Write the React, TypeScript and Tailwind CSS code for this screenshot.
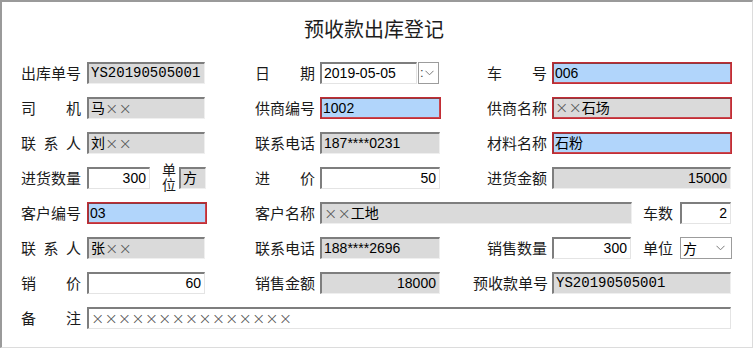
import React from 'react';

const cjk = "font-['Noto_Sans_CJK_SC',sans-serif]";
const latin = "font-['Liberation_Sans','Noto_Sans_CJK_SC',sans-serif]";
const mono = "font-['Liberation_Mono','Noto_Sans_CJK_SC',monospace]";

type Variant = 'gray' | 'white' | 'blue' | 'grayRed';

const variants: Record<Variant, string> = {
  gray: 'bg-[#dadada] border-t-2 border-l-2 border-b border-r border-t-[#7e7e7e] border-l-[#7e7e7e] border-b-[#efefef] border-r-[#efefef]',
  white: 'bg-white border-t-2 border-l-2 border-b border-r border-t-[#7e7e7e] border-l-[#7e7e7e] border-b-[#e4e4e4] border-r-[#e4e4e4]',
  blue: 'bg-[#b1d5fb] border border-[#c22d35] shadow-[inset_1px_1px_0_#8d3a3f,inset_-1px_-1px_0_#c9464d]',
  grayRed: 'bg-[#dadada] border border-[#c22d35] shadow-[inset_1px_1px_0_#8d3a3f,inset_-1px_-1px_0_#c9464d]',
};

// render × as thin full-width-ish crosses
const withX = (s: string) =>
  s.split('').map((ch, i) =>
    ch === '×' ? (
      <span key={i} className="text-[16px] leading-[22px] font-['DejaVu_Sans',sans-serif] font-extralight text-[#555]">×</span>
    ) : (
      <span key={i}>{ch}</span>
    )
  );

const Field = ({
  value,
  variant = 'gray',
  right,
  isMono,
  className,
}: {
  value: string;
  variant?: Variant;
  right?: boolean;
  isMono?: boolean;
  className: string;
}) => (
  <div
    className={`h-[22px] flex items-center overflow-hidden whitespace-nowrap text-[14px] text-black ${
      right ? 'justify-end pr-[3px]' : 'pl-[2px]'
    } ${isMono ? mono : latin} ${variants[variant]} ${className}`}
  >
    {withX(value)}
  </div>
);

// justified label, e.g. 司   机
const Label = ({ text, className = 'w-[60px]', spread }: { text: string; className?: string; spread?: boolean }) => (
  <div className={`${cjk} text-[15px] leading-[22px] text-[#1b1b1b] whitespace-nowrap flex ${spread ? 'justify-between' : ''} ${className}`}>
    {text.split('').map((c, i) => (
      <span key={i}>{c}</span>
    ))}
  </div>
);

const Chevron = () => (
  <svg width="9" height="6" viewBox="0 0 9 6" className="shrink-0">
    <polyline points="0.5,0.8 4.5,4.8 8.5,0.8" fill="none" stroke="#7a7a7a" strokeWidth="1" />
  </svg>
);

export default function App() {
  return (
    <div className="w-[755px] h-[350px] bg-white">
      <div className="w-[753px] h-[348px] border-t-2 border-l-2 border-r border-b border-t-[#9a9a9a] border-l-[#9a9a9a] border-r-[#dcdcdc] border-b-[#dcdcdc] pt-[17px]">
        <div className={`${cjk} text-[20px] leading-[20px] text-[#1d1d1d] text-center pr-[6px]`}>预收款出库登记</div>

        <div className="mt-[23px] pl-[19px] flex flex-col gap-[13px]">
          {/* row 1 */}
          <div className="flex items-center h-[22px]">
            <div className="w-[234px] flex items-center gap-[6px]">
              <Label text="出库单号" />
              <Field value="YS20190505001" isMono className="w-[118px]" />
            </div>
            <div className="w-[232px] flex items-center gap-[5px]">
              <Label text="日期" spread />
              <Field value="2019-05-05" variant="white" className="w-[97px]" />
              <div className={`-ml-[4px] w-[21px] h-[22px] border border-[#9c9c9c] bg-white flex items-center gap-[1px] ${latin} text-[13px] text-[#444]`}>
                <span className="pl-[1px]">:</span>
                <Chevron />
              </div>
            </div>
            <div className="flex items-center gap-[5px]">
              <Label text="车号" spread />
              <Field value="006" variant="blue" className="w-[180px]" />
            </div>
          </div>

          {/* row 2 */}
          <div className="flex items-center h-[22px]">
            <div className="w-[234px] flex items-center gap-[6px]">
              <Label text="司机" spread />
              <Field value="马××" className="w-[118px]" />
            </div>
            <div className="w-[232px] flex items-center gap-[5px]">
              <Label text="供商编号" />
              <Field value="1002" variant="blue" className="w-[121px]" />
            </div>
            <div className="flex items-center gap-[5px]">
              <Label text="供商名称" />
              <Field value="××石场" variant="grayRed" className="w-[180px]" />
            </div>
          </div>

          {/* row 3 */}
          <div className="flex items-center h-[22px]">
            <div className="w-[234px] flex items-center gap-[6px]">
              <Label text="联系人" spread />
              <Field value="刘××" className="w-[118px]" />
            </div>
            <div className="w-[232px] flex items-center gap-[5px]">
              <Label text="联系电话" />
              <Field value="187****0231" className="w-[120px]" />
            </div>
            <div className="flex items-center gap-[5px]">
              <Label text="材料名称" />
              <Field value="石粉" variant="blue" className="w-[180px]" />
            </div>
          </div>

          {/* row 4 */}
          <div className="flex items-center h-[22px]">
            <div className="w-[234px] flex items-center">
              <Label text="进货数量" />
              <Field value="300" variant="white" right className="ml-[6px] w-[63px]" />
              <div className={`${cjk} ml-[11px] w-[15px] h-[30px] text-[14px] leading-[15px] tracking-[1px] text-[#1b1b1b] [writing-mode:vertical-rl]`}>
                单位
              </div>
              <Field value="方" className="ml-[3px] w-[27px]" />
            </div>
            <div className="w-[232px] flex items-center gap-[5px]">
              <Label text="进价" spread />
              <Field value="50" variant="white" right className="w-[120px]" />
            </div>
            <div className="flex items-center gap-[5px]">
              <Label text="进货金额" />
              <Field value="15000" right className="w-[179px]" />
            </div>
          </div>

          {/* row 5 */}
          <div className="flex items-center h-[22px]">
            <div className="w-[234px] flex items-center gap-[6px]">
              <Label text="客户编号" />
              <Field value="03" variant="blue" className="w-[120px]" />
            </div>
            <div className="flex items-center">
              <Label text="客户名称" />
              <Field value="××工地" className="ml-[5px] w-[312px]" />
              <Label text="车数" className="ml-[11px] w-[30px]" />
              <Field value="2" variant="white" right className="ml-[7px] w-[51px]" />
            </div>
          </div>

          {/* row 6 */}
          <div className="flex items-center h-[22px]">
            <div className="w-[234px] flex items-center gap-[6px]">
              <Label text="联系人" spread />
              <Field value="张××" className="w-[118px]" />
            </div>
            <div className="w-[232px] flex items-center gap-[5px]">
              <Label text="联系电话" />
              <Field value="188****2696" className="w-[120px]" />
            </div>
            <div className="flex items-center">
              <Label text="销售数量" />
              <Field value="300" variant="white" right className="ml-[5px] w-[79px]" />
              <Label text="单位" className="ml-[12px] w-[30px]" />
              <div className={`ml-[7px] w-[52px] h-[22px] border border-[#9c9c9c] bg-white flex items-center justify-between pl-[2px] pr-[6px] ${cjk} text-[14px] text-black`}>
                <span>方</span>
                <Chevron />
              </div>
            </div>
          </div>

          {/* row 7 */}
          <div className="flex items-center h-[22px]">
            <div className="w-[234px] flex items-center gap-[6px]">
              <Label text="销价" spread />
              <Field value="60" variant="white" right className="w-[118px]" />
            </div>
            <div className="w-[218px] flex items-center gap-[5px]">
              <Label text="销售金额" />
              <Field value="18000" right className="w-[120px]" />
            </div>
            <div className="flex items-center gap-[5px]">
              <Label text="预收款单号" className="w-[74px]" />
              <Field value="YS20190505001" isMono className="w-[179px]" />
            </div>
          </div>

          {/* row 8 */}
          <div className="flex items-center h-[22px]">
            <div className="flex items-center gap-[6px]">
              <Label text="备注" spread />
              <Field value="×××××××××××××××" variant="white" className="w-[644px]" />
            </div>
          </div>
        </div>
      </div>
    </div>
  );
}
